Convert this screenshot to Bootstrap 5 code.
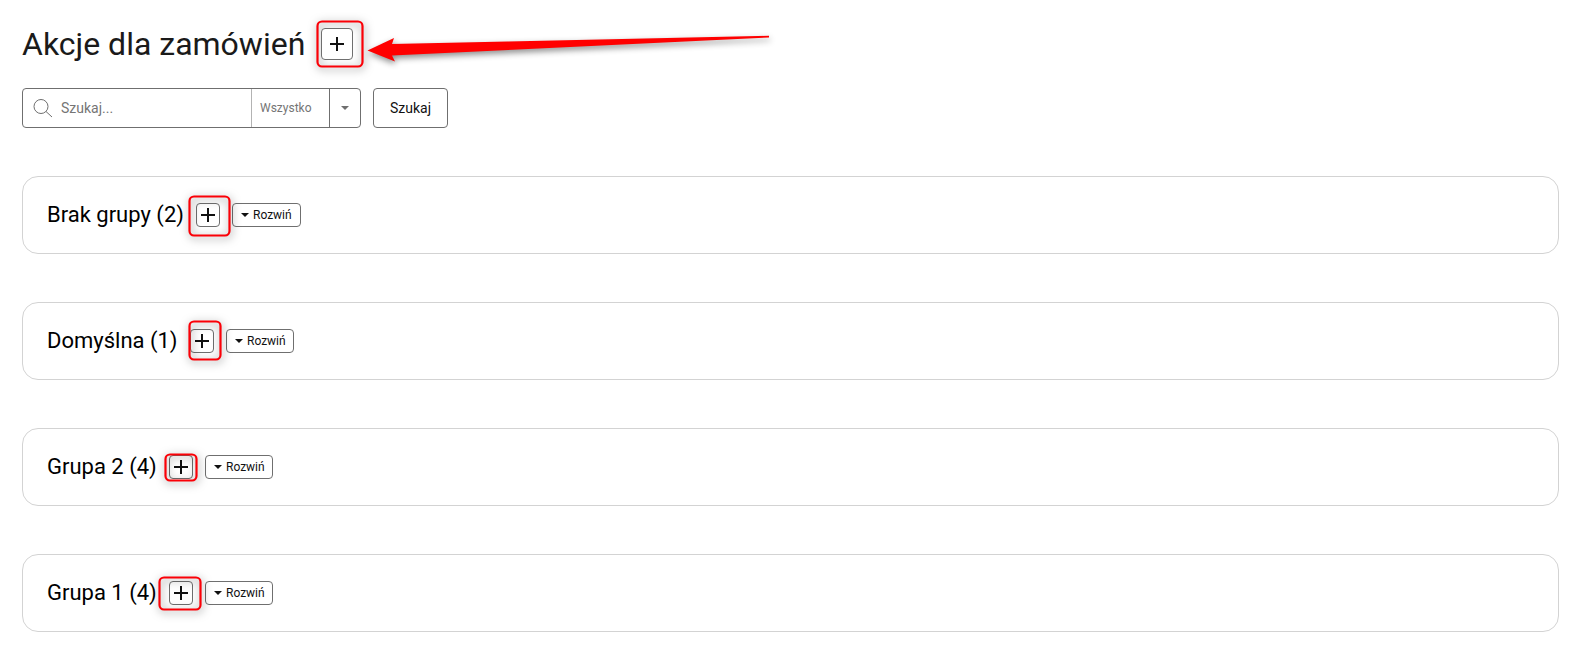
<!DOCTYPE html>
<html lang="pl">
<head>
<meta charset="utf-8">
<meta name="viewport" content="width=device-width, initial-scale=1">
<title>Akcje dla zamówień</title>
<link href="https://cdn.jsdelivr.net/npm/bootstrap@5.3.0/dist/css/bootstrap.min.css" rel="stylesheet">
<style>
body{font-family:Roboto,"Noto Sans",sans-serif;font-size:14px;color:#000;background:#fff;overflow:hidden}
.page{padding:28px 13px 0 22px}
.page h1{font-size:32px;font-weight:400;line-height:32px;color:#1a1a1a;width:299px}
.outlined{border:1px solid #6f6f6f;border-radius:4px;background:#fff;color:#111;padding:0;font-size:14px}
.add-lg{width:32px;height:32px}
.add-sm{width:24px;height:24px}
.search{width:339px;height:40px;border:1px solid #6f6f6f;border-radius:4px}
.search input{border:0;background:none;font-size:14px;padding:0;height:38px;line-height:38px;flex:1;min-width:0;outline:0}
.search input::placeholder{color:#757575;opacity:1}
.scope{width:78px;border-left:1px solid #b3b3b3;font-size:12px;color:#757575;padding-left:8px}
.arrow-cell{width:31px;border-left:1px solid #6f6f6f}
.caret{width:0;height:0;border:4px solid transparent;border-top-color:currentColor;border-bottom:0}
.go{width:75px;height:40px}
.groups{margin-top:48px;gap:48px}
.group-card{height:78px;border:1px solid #d3d3d3;border-radius:16px;padding:0 24px}
.group-card h2{font-size:22px;font-weight:400;line-height:24px;color:#000;white-space:nowrap}
.expand{height:24px;width:68px;font-size:12px;padding:0 0 0 8px;gap:4px;margin-left:12px}
.mark-box{position:absolute;fill:none;stroke:#fb0007;stroke-width:2.2;filter:drop-shadow(1px 2px 4px rgba(0,0,0,.5));pointer-events:none;overflow:visible}
.pointer{position:absolute;left:360px;top:20px;filter:drop-shadow(1px 3px 3px rgba(0,0,0,.45));overflow:visible}
</style>
</head>
<body>
<main class="page">
  <header class="d-flex align-items-center">
    <h1 class="m-0 text-nowrap">Akcje dla zamówień</h1>
    <div class="position-relative add-lg">
      <svg class="mark-box" width="48" height="48" style="left:-5px;top:-8px"><rect x="1.5" y="1.5" width="45" height="45" rx="4.5"/></svg>
      <button class="outlined add-lg d-flex align-items-center justify-content-center position-relative" aria-label="Dodaj">
        <svg width="14" height="14" stroke="#111" stroke-width="2"><path d="M7 0v14M0 7h14"/></svg>
      </button>
    </div>
  </header>
  <svg class="pointer" width="412" height="50" aria-hidden="true"><path fill="#f00" d="M7.5 30.5 34 18 32 24 409 15.8v1.6L32 35.5l3 6z"/></svg>

  <form class="d-flex" style="margin-top:28px;gap:12px">
    <div class="search d-flex">
      <svg class="flex-shrink-0" width="38" height="38" fill="none" stroke="#6f6f6f" stroke-width="1"><circle cx="18" cy="17.5" r="7"/><path d="M23 22.5l6 5.5"/></svg>
      <input type="text" placeholder="Szukaj..." aria-label="Szukaj">
      <div class="scope d-flex align-items-center">Wszystko</div>
      <div class="arrow-cell d-flex align-items-center justify-content-center" style="color:#6f6f6f"><span class="caret"></span></div>
    </div>
    <button type="button" class="outlined go">Szukaj</button>
  </form>

  <section class="groups d-flex flex-column">
    <div class="group-card d-flex align-items-center">
      <h2 class="m-0" style="width:149px">Brak grupy (2)</h2>
      <div class="position-relative add-sm">
        <button class="outlined add-sm d-flex align-items-center justify-content-center" aria-label="Dodaj"><svg width="14" height="14" stroke="#111" stroke-width="2"><path d="M7 0v14M0 7h14"/></svg></button>
        <svg class="mark-box" width="43" height="42" style="left:-8px;top:-8px"><rect x="1.5" y="1.5" width="40" height="39" rx="4.5"/></svg>
      </div>
      <button class="outlined expand d-flex align-items-center" style="width:69px"><span class="caret"></span>Rozwiń</button>
    </div>
    <div class="group-card d-flex align-items-center">
      <h2 class="m-0" style="width:143px">Domyślna (1)</h2>
      <div class="position-relative add-sm">
        <button class="outlined add-sm d-flex align-items-center justify-content-center" aria-label="Dodaj"><svg width="14" height="14" stroke="#111" stroke-width="2"><path d="M7 0v14M0 7h14"/></svg></button>
        <svg class="mark-box" width="34" height="41" style="left:-2px;top:-9px"><rect x="1.5" y="1.5" width="31" height="38" rx="4.5"/></svg>
      </div>
      <button class="outlined expand d-flex align-items-center"><span class="caret"></span>Rozwiń</button>
    </div>
    <div class="group-card d-flex align-items-center">
      <h2 class="m-0" style="width:122px">Grupa 2 (4)</h2>
      <div class="position-relative add-sm">
        <button class="outlined add-sm d-flex align-items-center justify-content-center" aria-label="Dodaj"><svg width="14" height="14" stroke="#111" stroke-width="2"><path d="M7 0v14M0 7h14"/></svg></button>
        <svg class="mark-box" width="34" height="29" style="left:-5px;top:-2px"><rect x="1.5" y="1.5" width="31" height="26" rx="4.5"/></svg>
      </div>
      <button class="outlined expand d-flex align-items-center"><span class="caret"></span>Rozwiń</button>
    </div>
    <div class="group-card d-flex align-items-center">
      <h2 class="m-0" style="width:122px">Grupa 1 (4)</h2>
      <div class="position-relative add-sm">
        <button class="outlined add-sm d-flex align-items-center justify-content-center" aria-label="Dodaj"><svg width="14" height="14" stroke="#111" stroke-width="2"><path d="M7 0v14M0 7h14"/></svg></button>
        <svg class="mark-box" width="44" height="35" style="left:-11px;top:-5px"><rect x="1.5" y="1.5" width="41" height="32" rx="4.5"/></svg>
      </div>
      <button class="outlined expand d-flex align-items-center"><span class="caret"></span>Rozwiń</button>
    </div>
  </section>
</main>
<script src="https://cdn.jsdelivr.net/npm/bootstrap@5.3.0/dist/js/bootstrap.bundle.min.js"></script>
</body>
</html>
